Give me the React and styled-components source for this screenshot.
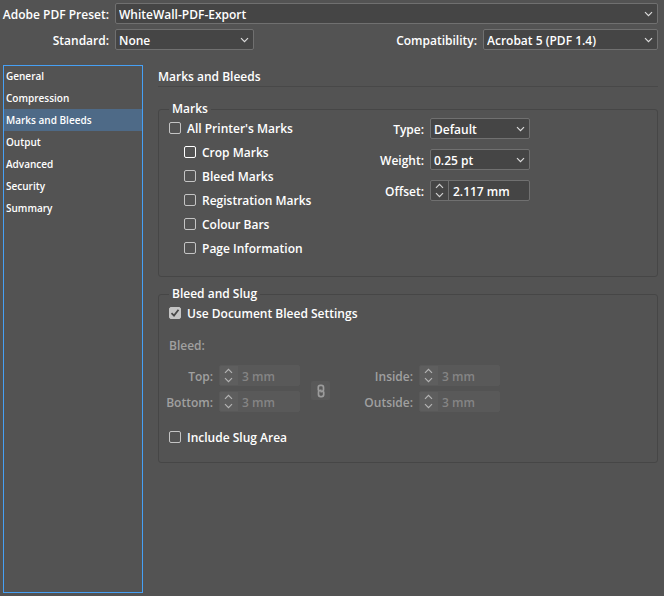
import React, { useId, useState } from "react";
import styled, { createGlobalStyle } from "styled-components";

const GlobalStyle = createGlobalStyle`
  *, *::before, *::after { box-sizing: border-box; }
  body {
    margin: 0;
    background: #535353;
    color: #fff;
    font: 600 12px/16px "Open Sans", "Noto Sans", sans-serif;
  }
  button, input, select { font: inherit; color: inherit; margin: 0; }
`;

const Dialog = styled.main`
  display: flex;
  flex-direction: column;
  min-height: 100vh;
  padding: 3px 6px 3px 3px;
`;

const Header = styled.header`
  display: grid;
  grid-template-columns: 106px 139px 1fr 175px;
  column-gap: 6px;
  row-gap: 5px;
  align-items: center;
`;

const FieldLabel = styled.label`
  justify-self: end;
  padding-top: 2px;
  white-space: nowrap;
  color: ${(p) => (p.$dim ? "#a0a0a0" : "#fff")};
`;

const SelectBox = styled.span`
  display: grid;
  align-items: center;
  grid-column: ${(p) => (p.$wide ? "2 / -1" : "auto")};
  height: 21px;
  border: 1px solid #707070;
  border-radius: 2px;
  background: #454545;
  & > * { grid-area: 1 / 1; }
  & > svg { justify-self: end; margin-right: 4px; pointer-events: none; }
`;

const NativeSelect = styled.select`
  appearance: none;
  width: 100%;
  height: 19px;
  padding: 2px 18px 0 3px;
  border: 0;
  background: transparent;
  outline: 0;
  line-height: 17px;
`;

const Body = styled.div`
  display: grid;
  grid-template-columns: 140px 1fr;
  column-gap: 15px;
  flex: 1;
  margin-top: 15px;
`;

const Sidebar = styled.nav`
  display: flex;
  flex-direction: column;
  padding: 0 1px;
  box-shadow: inset 0 0 0 1px #46a0f5;
`;

const SidebarItem = styled.button`
  height: 22px;
  padding: 0 2px;
  border: 0;
  background: ${(p) => (p.$active ? "#4e6a87" : "transparent")};
  font-size: 10px;
  line-height: 22px;
  text-align: left;
`;

const Panel = styled.section`
  display: flex;
  flex-direction: column;
`;

const PanelTitle = styled.h1`
  margin: 0 0 14px;
  padding: 4px 0 1px;
  border-bottom: 1px solid #484848;
  font-size: 12px;
  font-weight: 600;
  line-height: 16px;
`;

const Group = styled.fieldset`
  min-width: 0;
  margin: 0 0 9px;
  padding: 0 10px 16px;
  border: 1px solid #464646;
  border-radius: 3px;
  & > legend { padding: 0 3px; line-height: 16px; }
`;

const MarksLayout = styled.div`
  display: grid;
  grid-template-columns: 190px 1fr;
  column-gap: 15px;
  padding-bottom: 3px;
`;

const CheckList = styled.div`
  display: flex;
  flex-direction: column;
  gap: 8px;
  padding-top: 4px;
`;

const CheckRow = styled.label`
  display: flex;
  align-items: center;
  gap: 6px;
  height: 16px;
  padding-left: ${(p) => (p.$nested ? "15px" : "0")};
  white-space: nowrap;
`;

const CheckBox = styled.span`
  display: grid;
  place-items: center;
  margin-bottom: 2px;
  & > * { grid-area: 1 / 1; }
  & > svg { visibility: hidden; pointer-events: none; }
  & > input:checked + svg { visibility: visible; }
`;

const CheckInput = styled.input`
  appearance: none;
  width: 12px;
  height: 12px;
  border: 1px solid ${(p) => (p.$bright ? "#fff" : "#c4c4c4")};
  border-radius: 2px;
  &:checked { background: #c4c4c4; }
`;

const MarkOptions = styled.div`
  display: grid;
  grid-template-columns: 50px 100px;
  column-gap: 6px;
  row-gap: 10px;
  align-content: start;
  align-items: center;
  padding-top: 1px;
`;

const Stepper = styled.span`
  display: grid;
  grid-template-columns: 18px 1fr;
  height: 21px;
  overflow: hidden;
  border: 1px solid ${(p) => (p.$dim ? "#595959" : "#707070")};
  border-radius: 2px;
  background: ${(p) => (p.$dim ? "#595959" : "#454545")};
  color: ${(p) => (p.$dim ? "#858585" : "#fff")};
`;

const StepButtons = styled.span`
  display: grid;
  grid-template-rows: 1fr 1fr;
  border-right: 1px solid ${(p) => (p.$dim ? "#5e5e5e" : "#707070")};
  background: ${(p) => (p.$dim ? "#5e5e5e" : "transparent")};
`;

const StepButton = styled.button`
  display: grid;
  place-items: center;
  min-height: 0;
  padding: 0;
  border: 0;
  background: transparent;
`;

const StepInput = styled.input`
  min-width: 0;
  width: 100%;
  padding: 2px 4px 0;
  border: 0;
  outline: 0;
  background: transparent;
  &:disabled { color: inherit; }
`;

const Note = styled.p`
  margin: 16px 0 11px;
  color: #a0a0a0;
`;

const BleedGrid = styled.div`
  display: grid;
  grid-template-columns: 44px 81px 24px 77px 81px;
  grid-template-rows: 21px 21px;
  column-gap: 6px;
  row-gap: 5px;
  align-items: center;
  margin-bottom: 18px;
`;

const LinkButton = styled.button`
  display: grid;
  grid-column: 3;
  grid-row: 1 / 3;
  place-items: center;
  justify-self: end;
  width: 19px;
  height: 19px;
  margin-top: 4px;
  padding: 0;
  border: 0;
  border-radius: 2px;
  background: #595959;
`;

function Chevron({ up, color = "#dcdcdc" }) {
  return (
    <svg width="9" height="6" viewBox="0 0 9 6" fill="none" stroke={color} strokeWidth="1.2" aria-hidden="true">
      <path d={up ? "M1 4.8 4.5 1.3 8 4.8" : "M1 1.2 4.5 4.7 8 1.2"} />
    </svg>
  );
}

function SelectField({ label, options, wide }) {
  const id = useId();
  return (
    <>
      <FieldLabel htmlFor={id}>{label}</FieldLabel>
      <SelectBox $wide={wide}>
        <NativeSelect id={id}>
          {options.map((o) => (
            <option key={o}>{o}</option>
          ))}
        </NativeSelect>
        <Chevron />
      </SelectBox>
    </>
  );
}

function StepField({ label, value, disabled }) {
  const id = useId();
  const color = disabled ? "#b4b4b4" : "#d0d0d0";
  return (
    <>
      <FieldLabel htmlFor={id} $dim={disabled}>{label}</FieldLabel>
      <Stepper $dim={disabled}>
        <StepButtons $dim={disabled}>
          <StepButton type="button" aria-label="Increase" disabled={disabled}>
            <Chevron up color={color} />
          </StepButton>
          <StepButton type="button" aria-label="Decrease" disabled={disabled}>
            <Chevron color={color} />
          </StepButton>
        </StepButtons>
        <StepInput id={id} defaultValue={value} disabled={disabled} />
      </Stepper>
    </>
  );
}

function Check({ children, nested, bright, checked }) {
  return (
    <CheckRow $nested={nested}>
      <CheckBox>
        <CheckInput type="checkbox" defaultChecked={checked} $bright={bright} />
        <svg width="10" height="10" viewBox="0 0 10 10" fill="none" stroke="#484848" strokeWidth="1.8" aria-hidden="true">
          <path d="M1.5 5.2 4 7.6 8.5 1.8" />
        </svg>
      </CheckBox>
      {children}
    </CheckRow>
  );
}

const SECTIONS = ["General", "Compression", "Marks and Bleeds", "Output", "Advanced", "Security", "Summary"];
const MARKS = ["Crop Marks", "Bleed Marks", "Registration Marks", "Colour Bars", "Page Information"];

export default function App() {
  const [section, setSection] = useState("Marks and Bleeds");
  return (
    <>
      <GlobalStyle />
      <Dialog>
        <Header>
          <SelectField label="Adobe PDF Preset:" options={["WhiteWall-PDF-Export"]} wide />
          <SelectField label="Standard:" options={["None"]} />
          <SelectField label="Compatibility:" options={["Acrobat 5 (PDF 1.4)"]} />
        </Header>
        <Body>
          <Sidebar>
            {SECTIONS.map((s) => (
              <SidebarItem key={s} type="button" $active={s === section} onClick={() => setSection(s)}>
                {s}
              </SidebarItem>
            ))}
          </Sidebar>
          <Panel>
            <PanelTitle>Marks and Bleeds</PanelTitle>
            <Group>
              <legend>Marks</legend>
              <MarksLayout>
                <CheckList>
                  <Check>All Printer's Marks</Check>
                  {MARKS.map((m) => (
                    <Check key={m} nested bright={m === "Crop Marks"}>{m}</Check>
                  ))}
                </CheckList>
                <MarkOptions>
                  <SelectField label="Type:" options={["Default"]} />
                  <SelectField label="Weight:" options={["0.25 pt"]} />
                  <StepField label="Offset:" value="2.117 mm" />
                </MarkOptions>
              </MarksLayout>
            </Group>
            <Group>
              <legend>Bleed and Slug</legend>
              <CheckList>
                <Check checked>Use Document Bleed Settings</Check>
              </CheckList>
              <Note>Bleed:</Note>
              <BleedGrid>
                <StepField label="Top:" value="3 mm" disabled />
                <LinkButton type="button" aria-label="Link bleed values" disabled>
                  <svg width="8" height="14" viewBox="0 0 8 14" fill="none" stroke="#9c9c9c" strokeWidth="1.7" aria-hidden="true">
                    <path d="M1.3 6.6V3.4a2 2 0 0 1 2-2h1.2a2 2 0 0 1 2 2v2.2a2 2 0 0 1-2 2H3.4M6.7 7.4v3.2a2 2 0 0 1-2 2H3.5a2 2 0 0 1-2-2V8.4a2 2 0 0 1 2-2H4.6" />
                  </svg>
                </LinkButton>
                <StepField label="Inside:" value="3 mm" disabled />
                <StepField label="Bottom:" value="3 mm" disabled />
                <StepField label="Outside:" value="3 mm" disabled />
              </BleedGrid>
              <Check>Include Slug Area</Check>
            </Group>
          </Panel>
        </Body>
      </Dialog>
    </>
  );
}
